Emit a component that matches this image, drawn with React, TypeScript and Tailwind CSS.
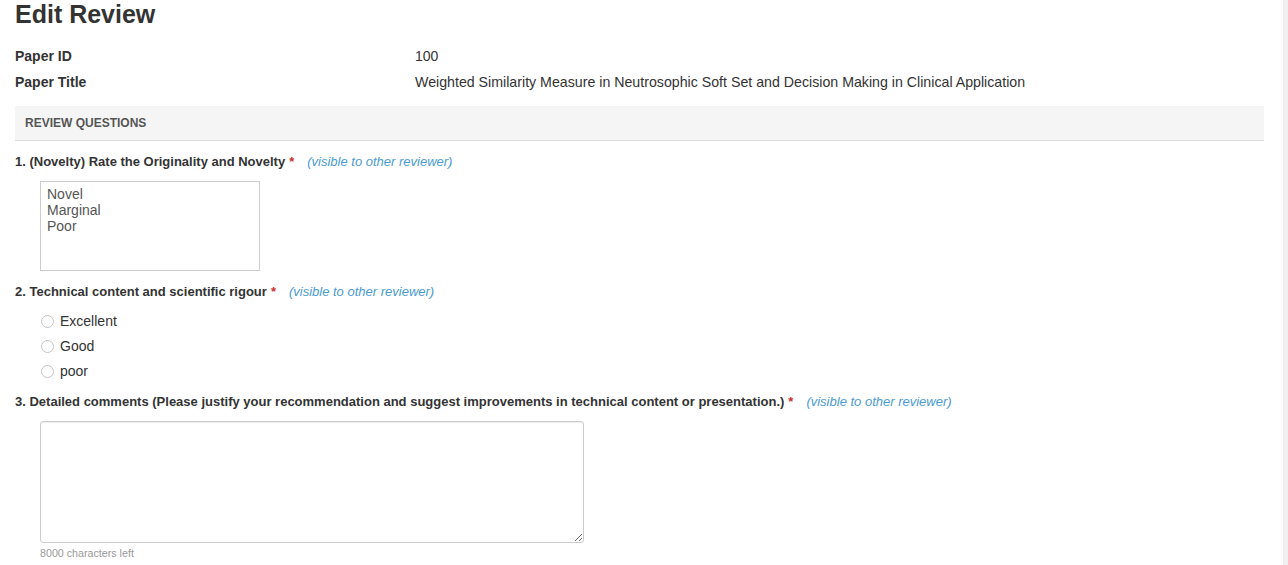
import React from 'react';

const Required = () => <span className="text-[#c9302c] ml-1">*</span>;

const Visible = () => (
    <span className="ml-[13px] italic font-normal text-[#4a9bd1]">(visible to other reviewer)</span>
);

export default function App() {
    const radios = ['Excellent', 'Good', 'poor'];

    return (
        <div className="flex min-h-[565px] bg-white text-[#333] font-['Liberation_Sans',Arial,sans-serif]">
            <div className="flex-1 pl-[15px] pr-[19px]">
                <h1 className="pt-[1px] h-[28px] text-[25px] leading-[27px] font-bold">Edit Review</h1>

                {/* Paper info */}
                <div className="mt-[18px] flex flex-col gap-[6px] text-[14px] leading-[20px]">
                    <div className="flex">
                        <div className="w-[400px] font-bold">Paper ID</div>
                        <div>100</div>
                    </div>
                    <div className="flex">
                        <div className="w-[400px] font-bold">Paper Title</div>
                        <div className="text-[14.2px]">Weighted Similarity Measure in Neutrosophic Soft Set and Decision Making in Clinical Application</div>
                    </div>
                </div>

                {/* Section header */}
                <div className="mt-[14px] bg-[#f5f5f5] border-b border-[#dddddd] pl-[10px] pt-[9px] pb-[8px] text-[12px] leading-[17px] font-bold text-[#555]">
                    REVIEW QUESTIONS
                </div>

                {/* Q1 */}
                <div className="mt-[12px] text-[13px] leading-[18px] font-bold">
                    1. (Novelty) Rate the Originality and Novelty<Required /><Visible />
                </div>
                <div role="listbox" className="mt-[10px] ml-[25px] w-[220px] h-[90px] border border-[#cccccc] pt-[4px] pl-[6px] text-[14px] leading-[16px] text-[#555]">
                    <div role="option">Novel</div>
                    <div role="option">Marginal</div>
                    <div role="option">Poor</div>
                </div>

                {/* Q2 */}
                <div className="mt-[12px] text-[13px] leading-[18px] font-bold">
                    2. Technical content and scientific rigour<Required /><Visible />
                </div>
                <div className="mt-[10px] ml-[25px] flex flex-col gap-[5px] text-[14px] leading-[20px]">
                    {radios.map(r => (
                        <label key={r} className="flex items-center">
                            <input type="radio" name="q2" className="appearance-none m-0 ml-[1px] w-[13px] h-[13px] rounded-full border border-[#c4c4c4] bg-white" />
                            <span className="ml-[6px]">{r}</span>
                        </label>
                    ))}
                </div>

                {/* Q3 */}
                <div className="mt-[12px] text-[13px] leading-[18px] font-bold">
                    3. Detailed comments (Please justify your recommendation and suggest improvements in technical content or presentation.)<Required /><Visible />
                </div>
                <textarea className="block mt-[10px] ml-[25px] w-[544px] h-[122px] border border-[#cccccc] rounded-[3px] shadow-[inset_0_1px_1px_rgba(0,0,0,0.075)]" />
                <div className="mt-[3px] ml-[25px] text-[10.7px] leading-[14px] text-[#999]">8000 characters left</div>
            </div>
            <div className="w-[5px] bg-[#f1f0ee]" />
        </div>
    );
}
